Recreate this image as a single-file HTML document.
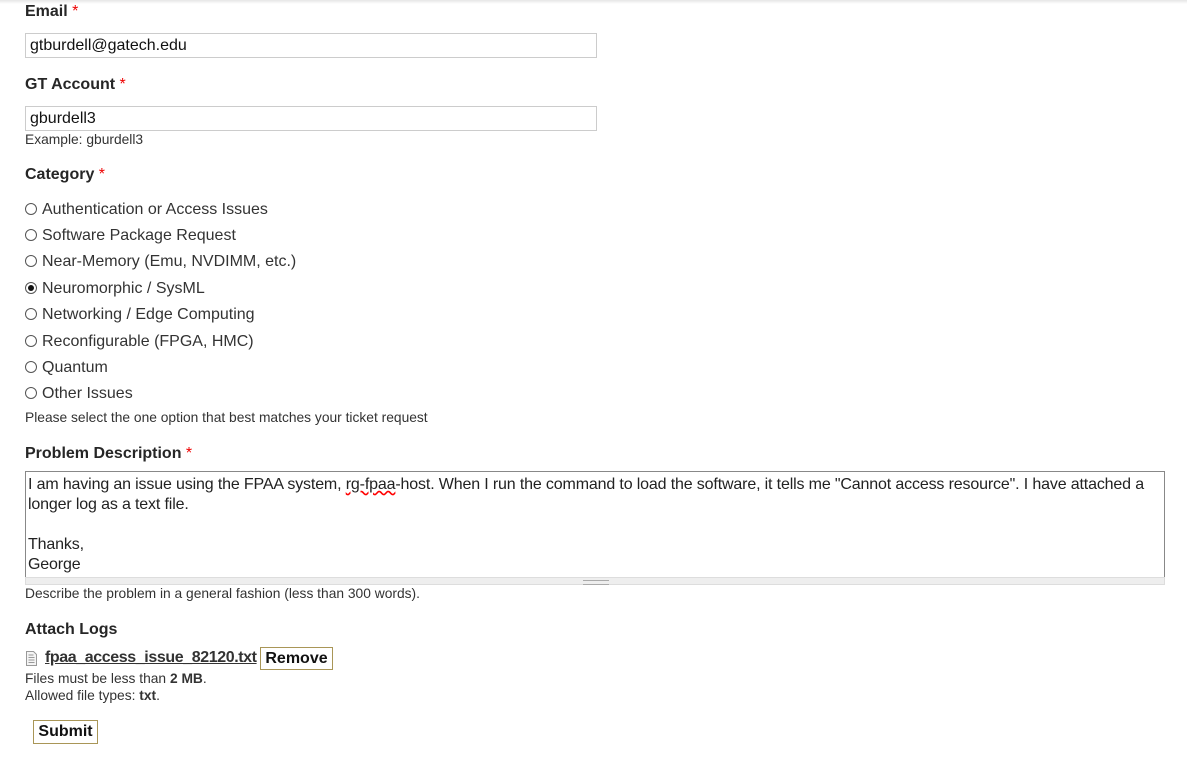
<!DOCTYPE html>
<html><head><style>
body{margin:0;width:1187px;height:762px;background:#fff;font-family:"Liberation Sans",sans-serif;color:#333;position:relative;overflow:hidden}
.a{position:absolute;white-space:nowrap}
.l{font-weight:bold;font-size:16px;color:#262626}
.l span{color:#e00;font-weight:normal}
.s{font-size:13.8px}
.in{position:absolute;left:25px;border:1px solid #ccc;font-size:16px;line-height:23px;padding-left:4px;box-sizing:border-box;width:572px;height:25px;color:#111}
.r{font-size:16px;color:#333;left:25px}
.r i{display:inline-block;width:12px;height:12px;border:1px solid #555;border-radius:50%;margin-right:5px;vertical-align:-1px;box-sizing:border-box;position:relative}
.r i.c::after{content:"";position:absolute;left:2px;top:2px;width:6px;height:6px;border-radius:50%;background:#111}
.btn{position:absolute;border:1px solid #a99657;font-weight:bold;font-size:16px;color:#111;box-sizing:border-box;text-align:center}
</style></head><body>
<div class="a" style="left:0;top:0;width:1187px;height:4px;background:linear-gradient(#e6e6e6,#fff)"></div>
<div class="a l" style="left:25px;top:3px">Email <span>*</span></div>
<div class="in" style="top:33px">gtburdell@gatech.edu</div>
<div class="a l" style="left:25px;top:76px">GT Account <span>*</span></div>
<div class="in" style="top:106px">gburdell3</div>
<div class="a s" style="left:25px;top:132px">Example: gburdell3</div>
<div class="a l" style="left:25px;top:166px">Category <span>*</span></div>
<div class="a r" style="top:201px"><i></i>Authentication or Access Issues</div>
<div class="a r" style="top:227px"><i></i>Software Package Request</div>
<div class="a r" style="top:253px"><i></i>Near-Memory (Emu, NVDIMM, etc.)</div>
<div class="a r" style="top:280px"><i class="c"></i>Neuromorphic / SysML</div>
<div class="a r" style="top:306px"><i></i>Networking / Edge Computing</div>
<div class="a r" style="top:333px"><i></i>Reconfigurable (FPGA, HMC)</div>
<div class="a r" style="top:359px"><i></i>Quantum</div>
<div class="a r" style="top:385px"><i></i>Other Issues</div>
<div class="a s" style="left:25px;top:410px">Please select the one option that best matches your ticket request</div>
<div class="a l" style="left:25px;top:445px">Problem Description <span>*</span></div>
<div class="a" style="left:25px;top:471px;width:1140px;height:107px;border:1px solid #888;box-sizing:border-box;font-size:16px;line-height:20px;padding:3px 2px;color:#222;white-space:normal;letter-spacing:-0.15px">I am having an issue using the FPAA system, <u style="text-decoration:underline wavy red">rg-fpaa</u>-host. When I run the command to load the software, it tells me "Cannot access resource". I have attached a<br>longer log as a text file.<br><br>Thanks,<br>George</div>
<div class="a" style="left:25px;top:577px;width:1140px;height:8px;background:#eee;border:1px solid #ddd;box-sizing:border-box"><div style="position:absolute;left:557px;top:2px;width:26px;height:3px;border-top:1px solid #aaa;border-bottom:1px solid #aaa"></div></div>
<div class="a s" style="left:25px;top:586px">Describe the problem in a general fashion (less than 300 words).</div>
<div class="a l" style="left:25px;top:621px">Attach Logs</div>
<svg class="a" style="left:26px;top:651px" width="11" height="15"><path d="M.5.5h7l3 3v11H.5z" fill="#f4f4f4" stroke="#999"/><path d="M2.5 4h5M2.5 6.5h6M2.5 9h6M2.5 11.5h6" stroke="#999"/></svg>
<div class="a" style="left:45px;top:649px;font-size:16px;font-weight:bold;text-decoration:underline;color:#333;letter-spacing:-0.4px">fpaa_access_issue_82120.txt</div>
<div class="btn" style="left:260px;top:647px;width:73px;height:23px;line-height:21px">Remove</div>
<div class="a s" style="left:25px;top:671px">Files must be less than <b>2 MB</b>.</div>
<div class="a s" style="left:25px;top:688px">Allowed file types: <b>txt</b>.</div>
<div class="btn" style="left:33px;top:720px;width:65px;height:24px;line-height:22px">Submit</div>
</body></html>
